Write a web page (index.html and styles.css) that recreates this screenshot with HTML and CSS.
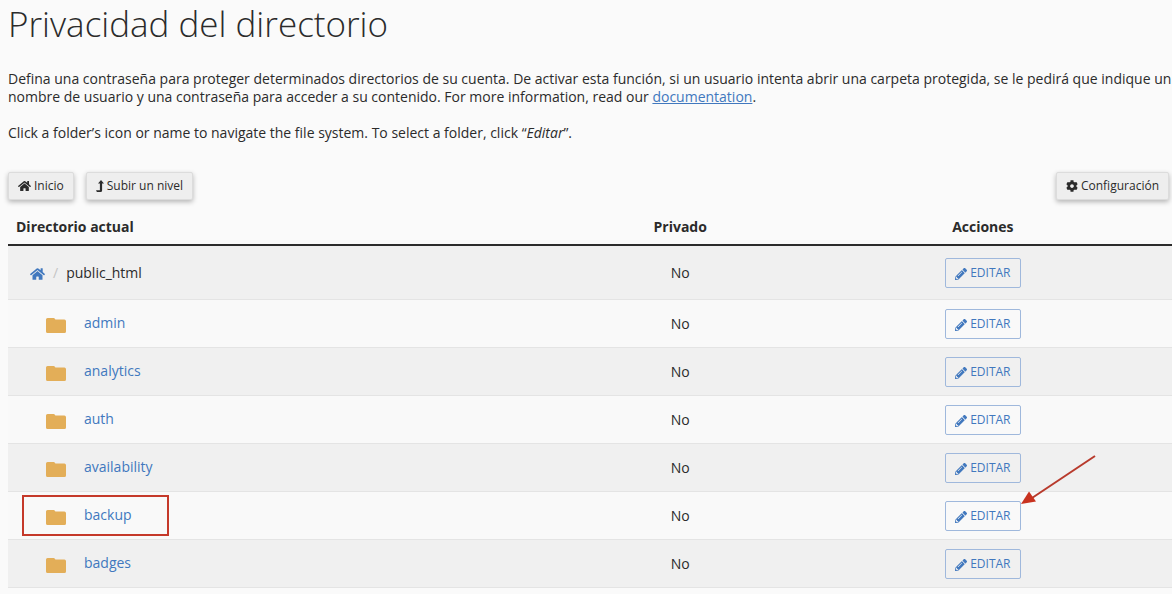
FILE: index.html
```html
<!DOCTYPE html>
<html lang="es">
<head>
<meta charset="utf-8">
<meta name="viewport" content="width=device-width, initial-scale=1">
<title>Privacidad del directorio</title>
<link rel="stylesheet" href="styles.css">
</head>
<body>
<svg class="sprite" aria-hidden="true">
  <symbol id="home" viewBox="0 0 576 512"><path d="M280.37 148.26L96 300.11V464a16 16 0 0 0 16 16l112.06-.29a16 16 0 0 0 15.92-16V368a16 16 0 0 1 16-16h64a16 16 0 0 1 16 16v95.64a16 16 0 0 0 16 16.05L464 480a16 16 0 0 0 16-16V300L295.67 148.26a12.19 12.19 0 0 0-15.3 0zM571.6 251.47L488 182.56V44.05a12 12 0 0 0-12-12h-56a12 12 0 0 0-12 12v72.61L318.47 43a48 48 0 0 0-61 0L4.34 251.47a12 12 0 0 0-1.6 16.9l25.5 31A12 12 0 0 0 45.15 301l235.22-193.74a12.19 12.19 0 0 1 15.3 0L530.9 301a12 12 0 0 0 16.9-1.6l25.5-31a12 12 0 0 0-1.7-16.93z"/></symbol>
  <symbol id="up" viewBox="0 0 8 12"><path d="M5 0 8 3.6H6.1V10.4Q6.1 12 4.5 12H.9L0 10.2H3.9V3.6H2Z"/></symbol>
  <symbol id="cog" viewBox="0 0 512 512"><path d="M487.4 315.7l-42.6-24.6c4.3-23.2 4.3-47 0-70.2l42.6-24.6c4.9-2.8 7.1-8.6 5.5-14-11.1-35.6-30-67.8-54.7-94.6-3.8-4.1-10-5.1-14.8-2.3L380.8 110c-17.9-15.4-38.5-27.3-60.8-35.1V25.8c0-5.6-3.9-10.5-9.4-11.7-36.7-8.2-74.3-7.8-109.2 0-5.5 1.2-9.4 6.1-9.4 11.7V75c-22.2 7.9-42.8 19.8-60.8 35.1L88.7 85.5c-4.9-2.8-11-1.9-14.8 2.3-24.7 26.7-43.6 58.9-54.7 94.6-1.7 5.4.6 11.2 5.5 14L67.3 221c-4.3 23.2-4.3 47 0 70.2l-42.6 24.6c-4.9 2.8-7.1 8.6-5.5 14 11.1 35.6 30 67.8 54.7 94.6 3.8 4.1 10 5.1 14.8 2.3l42.6-24.6c17.9 15.4 38.5 27.3 60.8 35.1v49.2c0 5.6 3.9 10.5 9.4 11.7 36.7 8.2 74.3 7.8 109.2 0 5.5-1.2 9.4-6.1 9.4-11.7v-49.2c22.2-7.9 42.8-19.8 60.8-35.1l42.6 24.6c4.9 2.8 11 1.9 14.8-2.3 24.7-26.7 43.6-58.9 54.7-94.6 1.5-5.5-.7-11.3-5.6-14.1zM256 336c-44.1 0-80-35.9-80-80s35.9-80 80-80 80 35.9 80 80-35.9 80-80 80z"/></symbol>
  <symbol id="pencil" viewBox="0 0 512 512"><path d="M497.9 142.1l-46.1 46.1c-4.7 4.7-12.3 4.7-17 0l-111-111c-4.7-4.7-4.7-12.3 0-17l46.1-46.1c18.7-18.7 49.1-18.7 67.9 0l60.1 60.1c18.8 18.7 18.8 49.1 0 67.9zM284.2 99.8L21.6 362.4.4 483.9c-2.9 16.4 11.4 30.6 27.8 27.8l121.5-21.3 262.6-262.6c4.7-4.7 4.7-12.3 0-17l-111-111c-4.8-4.7-12.4-4.7-17.1 0zM124.1 339.9c-5.5-5.5-5.5-14.3 0-19.8l154-154c5.5-5.5 14.3-5.5 19.8 0s5.5 14.3 0 19.8l-154 154c-5.5 5.5-14.3 5.5-19.8 0zM88 424h48v36.3l-64.5 11.3-31.1-31.1L51.7 376H88v48z"/></symbol>
  <symbol id="folder" viewBox="0 0 20 15"><path d="M1.6 0H7.6Q8.6 0 9 1L9.4 1.6H18.4Q20 1.6 20 3.2V13.4Q20 15 18.4 15H1.6Q0 15 0 13.4V1.6Q0 0 1.6 0Z"/></symbol>
</svg>
<main>
  <h1>Privacidad del directorio</h1>
  <p>Defina una contraseña para proteger determinados directorios de su cuenta. De activar esta función, si un usuario intenta abrir una carpeta protegida, se le pedirá que indique un nombre de usuario y una contraseña para acceder a su contenido. For more information, read our <a class="doc" href="#">documentation</a>.</p>
  <p>Click a folder’s icon or name to navigate the file system. To select a folder, click “<em>Editar</em>”.</p>
  <div class="toolbar">
    <button class="btn" type="button"><svg class="i-home"><use href="#home"/></svg>Inicio</button>
    <button class="btn" type="button"><svg class="i-up"><use href="#up"/></svg>Subir un nivel</button>
    <button class="btn settings" type="button"><svg class="i-cog"><use href="#cog"/></svg>Configuración</button>
  </div>
  <table>
    <thead>
      <tr><th class="name" scope="col">Directorio actual</th><th class="private" scope="col">Privado</th><th scope="col">Acciones</th></tr>
    </thead>
    <tbody>
      <tr class="current"><td><div class="crumbs"><a href="#" aria-label="Inicio"><svg class="i-root"><use href="#home"/></svg></a><span class="slash">/</span><span>public_html</span></div></td><td>No</td><td><button class="edit" type="button"><svg><use href="#pencil"/></svg>EDITAR</button></td></tr>
      <tr><td><a class="folder" href="#"><svg><use href="#folder"/></svg>admin</a></td><td>No</td><td><button class="edit" type="button"><svg><use href="#pencil"/></svg>EDITAR</button></td></tr>
      <tr><td><a class="folder" href="#"><svg><use href="#folder"/></svg>analytics</a></td><td>No</td><td><button class="edit" type="button"><svg><use href="#pencil"/></svg>EDITAR</button></td></tr>
      <tr><td><a class="folder" href="#"><svg><use href="#folder"/></svg>auth</a></td><td>No</td><td><button class="edit" type="button"><svg><use href="#pencil"/></svg>EDITAR</button></td></tr>
      <tr><td><a class="folder" href="#"><svg><use href="#folder"/></svg>availability</a></td><td>No</td><td><button class="edit" type="button"><svg><use href="#pencil"/></svg>EDITAR</button></td></tr>
      <tr><td><a class="folder marked" href="#"><svg><use href="#folder"/></svg>backup</a></td><td>No</td><td><span class="pointed"><button class="edit" type="button"><svg><use href="#pencil"/></svg>EDITAR</button><svg class="arrow" viewBox="0 0 76 50" aria-hidden="true"><path d="M74 1 11 43" fill="none" stroke="#b83a2c" stroke-width="2"/><path d="M0 49 8 36.500 15 46.500Z" fill="#c8321f"/></svg></span></td></tr>
      <tr><td><a class="folder" href="#"><svg><use href="#folder"/></svg>badges</a></td><td>No</td><td><button class="edit" type="button"><svg><use href="#pencil"/></svg>EDITAR</button></td></tr>
    </tbody>
  </table>
</main>
</body>
</html>
```
FILE: styles.css
```css
* { box-sizing: border-box; }
body {
  margin: 0;
  background: #fafafa;
  color: #2b2b2b;
  font: 14px/18px "Open Sans", "Noto Sans", sans-serif;
}
main { padding-left: 8px; }
svg { fill: currentColor; flex: none; }
.sprite { display: none; }
a { color: #4178be; text-decoration: none; }
h1 { margin: 0 0 23px; font-size: 35px; line-height: 47px; font-weight: 300; }
p { margin: 0 0 18px; }
.doc { text-decoration: underline; }
.toolbar { display: flex; gap: 12px; padding: 12px 3px 10px 0; }
.btn, .edit {
  display: inline-flex;
  align-items: center;
  justify-content: center;
  font-family: inherit;
  line-height: 18px;
  white-space: nowrap;
}
.btn {
  gap: 3px;
  height: 28px;
  padding: 0 9px;
  border: 1px solid #dcdcdc;
  border-radius: 2px;
  background: #eeeeee;
  color: #2b2b2b;
  font-size: 12px;
  box-shadow: 0 2px 5px rgba(0, 0, 0, .28);
}
.settings { margin-left: auto; }
.i-home { width: 13px; height: 12px; }
.i-up { width: 8px; height: 12px; }
.i-cog { width: 12px; height: 12px; }
table { width: 100%; border-collapse: separate; border-spacing: 0; table-layout: fixed; }
th { padding: 8px; border-bottom: 2px solid #2b2b2b; text-align: center; font-weight: 700; }
th.name { width: 48%; text-align: left; }
th.private { width: 19.5%; }
td { height: 48px; padding: 0; border-bottom: 1px solid #e4e4e4; text-align: center; vertical-align: middle; }
tbody tr { background: #f9f9f9; }
tbody tr:nth-child(odd) { background: #f0f0f0; }
.current td { height: 54px; }
.crumbs { display: flex; align-items: center; gap: 8px; padding-left: 22px; }
.crumbs a { display: flex; padding-top: 3px; }
.i-root { width: 15px; height: 14px; }
.slash { color: #c4c4c4; }
.folder {
  display: flex;
  align-items: center;
  gap: 18px;
  width: 147px;
  height: 41px;
  margin-left: 14px;
  padding: 0 0 2px 22px;
  border: 2px solid transparent;
}
.folder svg { width: 20px; height: 20px; padding-top: 5px; color: #e3ae58; }
.marked { border-color: #c5392a; }
.edit {
  gap: 3px;
  height: 30px;
  padding: 0 9px;
  border: 1px solid #9fb8dc;
  border-radius: 2px;
  background: transparent;
  color: #4178be;
  font-size: 12px;
  vertical-align: middle;
}
.edit svg { width: 12px; height: 14px; padding-top: 2px; }
.pointed { position: relative; display: inline-block; }
.arrow { position: absolute; left: 100%; bottom: 26px; width: 76px; height: 50px; }
```
